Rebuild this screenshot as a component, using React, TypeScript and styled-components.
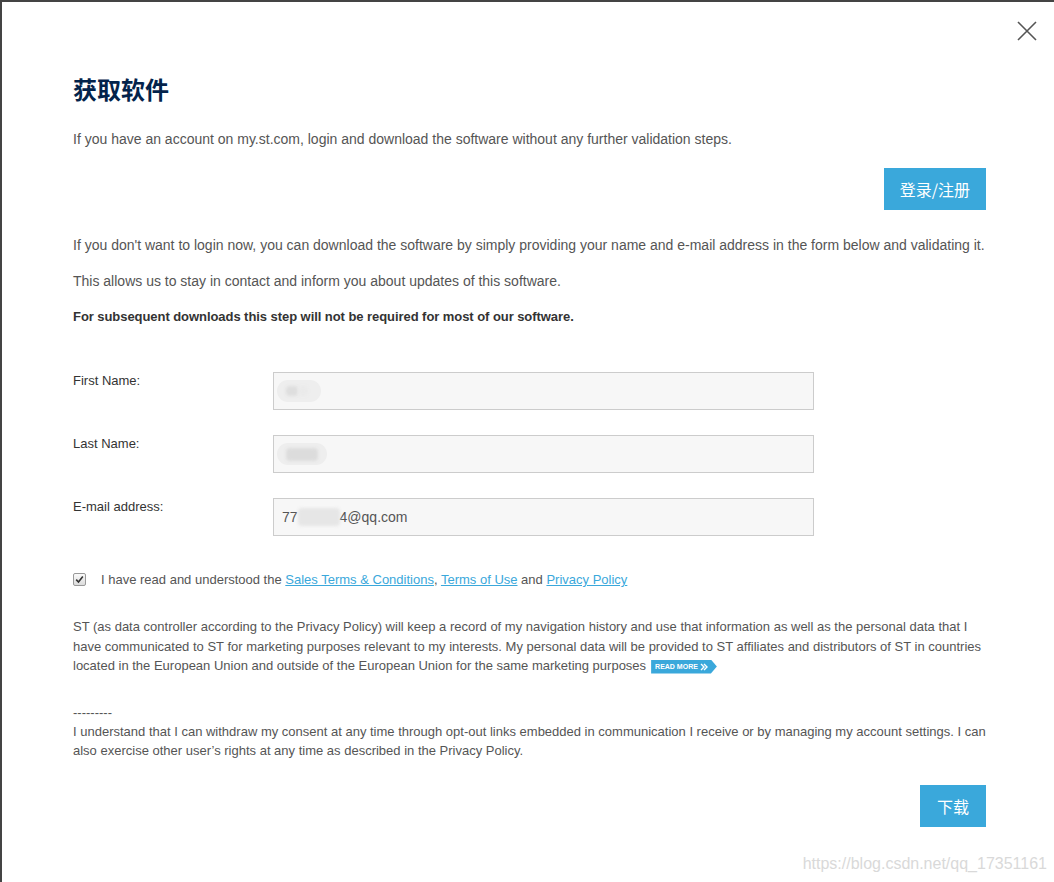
import React from 'react';
import styled, { createGlobalStyle } from 'styled-components';

const GlobalStyle = createGlobalStyle`
  html, body {
    margin: 0;
    padding: 0;
    background: #fff;
  }
  body {
    font-family: "Liberation Sans", Arial, "Noto Sans CJK SC", sans-serif;
  }
`;

const Frame = styled.div`
  position: relative;
  width: 1054px;
  height: 882px;
  box-sizing: border-box;
  border-top: 2px solid #444;
  border-left: 2px solid #444;
  overflow: hidden;
`;

const Modal = styled.div`
  display: flex;
  flex-direction: column;
  padding: 72px 68px 0 71px;
`;

const CloseButton = styled.button`
  position: absolute;
  top: 18px;
  right: 16px;
  width: 22px;
  height: 22px;
  padding: 0;
  border: none;
  background: none;
  cursor: pointer;
`;

const Title = styled.h1`
  margin: 0;
  font-family: "Noto Sans CJK SC", "Liberation Sans", sans-serif;
  font-size: 24px;
  line-height: 30px;
  font-weight: 700;
  color: #03234b;
`;

const Text = styled.p<{ $bold?: boolean }>`
  margin: 0;
  font-size: ${({ $bold }) => ($bold ? 13 : 14)}px;
  line-height: 20px;
  color: ${({ $bold }) => ($bold ? '#333' : '#555')};
  font-weight: ${({ $bold }) => ($bold ? 700 : 400)};
  letter-spacing: ${({ $bold }) => ($bold ? '-0.06px' : 'normal')};
`;

const Intro = styled(Text)`
  margin-top: 25px;
`;

const ButtonRow = styled.div<{ $top: number }>`
  display: flex;
  justify-content: flex-end;
  margin-top: ${({ $top }) => $top}px;
`;

const BlueButton = styled.button<{ $pad: number }>`
  height: 42px;
  padding: 0 ${({ $pad }) => $pad}px;
  border: none;
  background: #3aa8db;
  color: #fff;
  font-family: "Noto Sans CJK SC", "Liberation Sans", sans-serif;
  font-size: 16px;
  cursor: pointer;
`;

const Paragraphs = styled.div`
  display: flex;
  flex-direction: column;
  gap: 16px;
  margin-top: 25px;
`;

const Form = styled.div`
  display: flex;
  flex-direction: column;
  gap: 25px;
  margin-top: 45px;
`;

const FieldRow = styled.div`
  display: grid;
  grid-template-columns: 200px 541px;
  align-items: start;
`;

const Label = styled.label`
  font-size: 13px;
  line-height: 20px;
  color: #333;
  margin-top: -1px;
`;

const InputBox = styled.div`
  position: relative;
  height: 38px;
  box-sizing: border-box;
  border: 1px solid #ccc;
  background: #f7f7f7;
  display: flex;
  align-items: center;
  padding-left: 8px;
  font-size: 14px;
  color: #555;
`;

const Blur = styled.span<{ $w: number; $h: number; $dark: string }>`
  display: inline-block;
  width: ${({ $w }) => $w}px;
  height: ${({ $h }) => $h}px;
  background: ${({ $dark }) => $dark};
  filter: blur(1.5px);
  border-radius: 4px;
`;

const Halo = styled.span<{ $w: number }>`
  display: inline-flex;
  align-items: center;
  width: ${({ $w }) => $w}px;
  height: 22px;
  padding-left: 9px;
  box-sizing: border-box;
  margin-left: -5px;
  border-radius: 11px;
  background: #eeeeee;
`;

const CheckRow = styled.div`
  display: flex;
  align-items: center;
  gap: 15px;
  margin-top: 34px;
  font-size: 13px;
  line-height: 20px;
  color: #555;
`;

const CheckBox = styled.span`
  display: inline-flex;
  align-items: center;
  justify-content: center;
  width: 11px;
  height: 11px;
  border: 1px solid #999;
  border-radius: 2px;
  background: linear-gradient(#fafafa, #dcdcdc);
  margin-top: -2px;
`;

const Link = styled.a`
  color: #3aa8db;
  text-decoration: underline;
`;

const Legal = styled.p<{ $top: number; $lh: number }>`
  margin: ${({ $top }) => $top}px 0 0;
  font-size: 13px;
  line-height: ${({ $lh }) => $lh}px;
  color: #555;
`;

const ReadMore = styled.span`
  display: inline-flex;
  align-items: center;
  gap: 2px;
  height: 14px;
  padding: 0 9px 0 4px;
  margin-left: 5px;
  vertical-align: middle;
  background: #3aa8db;
  color: #fff;
  font-size: 7px;
  line-height: 14px;
  font-weight: 700;
  clip-path: polygon(0 0, calc(100% - 6px) 0, 100% 50%, calc(100% - 6px) 100%, 0 100%);
`;

const Watermark = styled.div`
  position: absolute;
  right: 7px;
  bottom: 9px;
  font-size: 16px;
  color: #d9d9d9;
`;

const App = () => {
  return (
    <Frame>
      <GlobalStyle />
      <CloseButton aria-label="close">
        <svg width="22" height="22" viewBox="0 0 22 22">
          <path d="M2 2 L20 20 M20 2 L2 20" stroke="#555" strokeWidth="1.6" fill="none" />
        </svg>
      </CloseButton>
      <Modal>
        <Title>获取软件</Title>
        <Intro>If you have an account on my.st.com, login and download the software without any further validation steps.</Intro>
        <ButtonRow $top={19}>
          <BlueButton $pad={16}>登录/注册</BlueButton>
        </ButtonRow>
        <Paragraphs>
          <Text>If you don't want to login now, you can download the software by simply providing your name and e-mail address in the form below and validating it.</Text>
          <Text>This allows us to stay in contact and inform you about updates of this software.</Text>
          <Text $bold>For subsequent downloads this step will not be required for most of our software.</Text>
        </Paragraphs>
        <Form>
          <FieldRow>
            <Label>First Name:</Label>
            <InputBox>
              <Halo $w={44}>
                <Blur $w={12} $h={10} $dark="#dedede" />
                <Blur $w={10} $h={10} $dark="#eaeaea" />
              </Halo>
            </InputBox>
          </FieldRow>
          <FieldRow>
            <Label>Last Name:</Label>
            <InputBox>
              <Halo $w={50}>
                <Blur $w={32} $h={13} $dark="#dcdcdc" />
              </Halo>
            </InputBox>
          </FieldRow>
          <FieldRow>
            <Label>E-mail address:</Label>
            <InputBox>
              77<Blur $w={42} $h={18} $dark="#e6e6e6" />4@qq.com
            </InputBox>
          </FieldRow>
        </Form>
        <CheckRow>
          <CheckBox>
            <svg width="9" height="9" viewBox="0 0 9 9">
              <path d="M1.2 4.6 L3.5 7 L7.8 1.6" stroke="#333" strokeWidth="1.6" fill="none" />
            </svg>
          </CheckBox>
          <span>
            I have read and understood the <Link>Sales Terms &amp; Conditions</Link>, <Link>Terms of Use</Link> and{' '}
            <Link>Privacy Policy</Link>
          </span>
        </CheckRow>
        <Legal $top={27} $lh={19.5}>
          ST (as data controller according to the Privacy Policy) will keep a record of my navigation history and use that information as well as the personal data that I have communicated to ST for marketing purposes relevant to my interests. My personal data will be provided to ST affiliates and distributors of ST in countries located in the European Union and outside of the European Union for the same marketing purposes
          <ReadMore>
            READ MORE
            <svg width="8" height="8" viewBox="0 0 8 8">
              <path d="M1 1 L4 4 L1 7 M4 1 L7 4 L4 7" stroke="#fff" strokeWidth="1.4" fill="none" />
            </svg>
          </ReadMore>
        </Legal>
        <Legal $top={27} $lh={19}>
          ---------
          <br />
          I understand that I can withdraw my consent at any time through opt-out links embedded in communication I receive or by managing my account settings. I can also exercise other user’s rights at any time as described in the Privacy Policy.
        </Legal>
        <ButtonRow $top={25}>
          <BlueButton $pad={17}>下载</BlueButton>
        </ButtonRow>
      </Modal>
      <Watermark>https://blog.csdn.net/qq_17351161</Watermark>
    </Frame>
  );
};

export default App;
